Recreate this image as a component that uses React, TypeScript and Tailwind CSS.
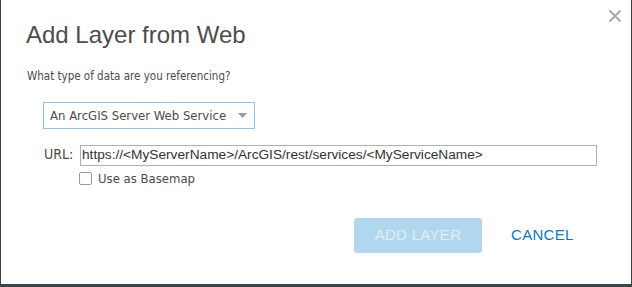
export default function App() {
  return (
    <div className="w-[632px] h-[287px] bg-[#3a4448] overflow-hidden">
      <div
        className="relative ml-px w-[630px] h-[284px] bg-white flex flex-col"
        style={{ fontFamily: '"Liberation Sans", Arial, sans-serif' }}
      >
        {/* close */}
        <button className="absolute left-[607px] top-[9px] w-[14px] h-[14px] text-[#a8a8a8]">
          <svg viewBox="0 0 14 14" width="14" height="14" stroke="currentColor" strokeWidth="1.8">
            <path d="M1.5 1.5 L12.5 12.5 M12.5 1.5 L1.5 12.5" />
          </svg>
        </button>

        <h1 className="pl-[25px] pt-[21px] text-[24px] leading-[28px] text-[#4c4c4c]">
          Add Layer from Web
        </h1>

        <p
          className="pl-[26px] mt-[20px] text-[11.5px] leading-[15px] text-[#4c4c4c]"
          style={{ fontFamily: '"DejaVu Sans Condensed", "DejaVu Sans", sans-serif' }}
        >
          What type of data are you referencing?
        </p>

        <div className="pl-[42px] mt-[18px]">
          <div className="w-[212px] h-[27px] border border-[#8fc3e6] flex items-center justify-between pl-[6px] pr-[7px] text-[13px] text-[#4c4c4c]">
            <span style={{ fontFamily: '"DejaVu Sans Condensed", "DejaVu Sans", sans-serif' }}>
              An ArcGIS Server Web Service
            </span>
            <svg width="9" height="5" viewBox="0 0 9 5">
              <path d="M0 0 L9 0 L4.5 5 Z" fill="#9a9a9a" />
            </svg>
          </div>
        </div>

        <div className="flex pl-[43px] mt-[16px] gap-[6px]">
          <span
            className="text-[14px] leading-[16px] pt-[1px] text-[#4c4c4c] w-[30px]"
            style={{ fontFamily: '"DejaVu Sans Condensed", "DejaVu Sans", sans-serif' }}
          >
            URL:
          </span>
          <div className="flex flex-col">
            <div className="w-[517px] h-[21px] border border-[#b0b0b0] flex items-center pl-[1px] text-[13.7px] text-[#333]">
              https://&lt;MyServerName&gt;/ArcGIS/rest/services/&lt;MyServiceName&gt;
            </div>
            <label className="flex items-center gap-[6px] mt-[5px] text-[13px] leading-[15px] text-[#4c4c4c]">
              <span className="-ml-px w-[13px] h-[13px] border border-[#9a9a9a] rounded-[2px] bg-white" />
              <span style={{ fontFamily: '"DejaVu Sans Condensed", "DejaVu Sans", sans-serif' }}>
                Use as Basemap
              </span>
            </label>
          </div>
        </div>

        <div className="flex items-center pl-[353px] mt-[32px]">
          <button className="w-[128px] h-[35px] rounded-[3px] bg-[#b1d7ef] text-[#deeef9] text-[15px] tracking-[0.3px]">
            ADD LAYER
          </button>
          <button className="ml-[29px] text-[#0b79c2] text-[15px] tracking-[0.3px]">
            CANCEL
          </button>
        </div>
      </div>
    </div>
  );
}
